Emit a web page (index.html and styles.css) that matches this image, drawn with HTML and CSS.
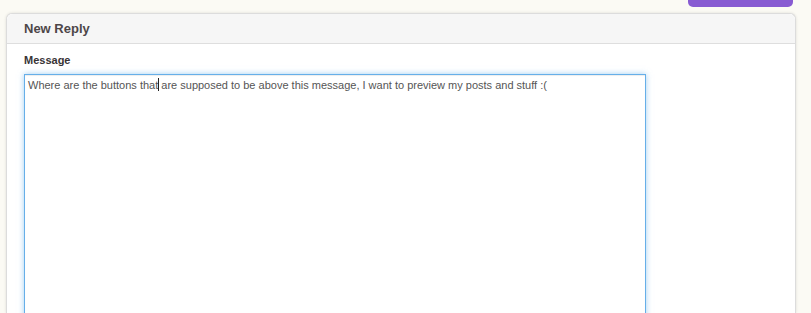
FILE: index.html
```html
<!DOCTYPE html>
<html>

<head>
  <title>New Reply</title>
  <link rel="stylesheet" href="styles.css">
</head>

<body>
  <div class="top-bar">
    <a class="top-btn" href="#"></a>
  </div>

  <section class="panel">
    <header class="panel-heading">New Reply</header>
    <div class="panel-body">
      <label class="field-label">Message</label>
      <div class="msg-input">Where are the buttons that<span class="caret"></span> are supposed to be above this message, I want to preview my posts and stuff :(</div>
    </div>
  </section>
</body>

</html>
```

FILE: styles.css
```css
html,
body {
  margin: 0;
  padding: 0;
  height: 100%;
  overflow: hidden;
}

body {
  background-color: #fbfaf4;
  font-family: "Liberation Sans", Arial, sans-serif;
  color: #4a4446;
}

.top-bar {
  display: flex;
  justify-content: flex-end;
  padding-right: 18px;
  height: 7px;
}

.top-btn {
  display: block;
  width: 105px;
  height: 7px;
  background-color: #885bd2;
  border-radius: 0 0 5px 5px;
}

.panel {
  margin: 6px 15px 0 6px;
  background-color: #fff;
  border: 1px solid #dcdcdc;
  border-bottom: none;
  border-radius: 6px 6px 0 0;
  box-shadow: 0 0 3px rgba(0, 0, 0, 0.12);
  height: 299px;
  overflow: hidden;
}

.panel-heading {
  background-color: #f6f6f6;
  border-bottom: 1px solid #dedede;
  border-radius: 6px 6px 0 0;
  height: 29px;
  padding-left: 17px;
  font-size: 13px;
  font-weight: bold;
  line-height: 30px;
  color: #4d4648;
}

.panel-body {
  padding: 9px 17px 0 17px;
}

.field-label {
  display: block;
  font-size: 11px;
  font-weight: bold;
  color: #383436;
  line-height: 14px;
  margin-bottom: 7px;
}

.msg-input {
  width: 614px;
  height: 300px;
  padding: 3px 3px;
  border: 1px solid #66afe9;
  box-shadow: inset 0 1px 1px rgba(0, 0, 0, 0.075), 0 0 6px rgba(102, 175, 233, 0.6);
  font-size: 11px;
  line-height: 15px;
  color: #555;
  background-color: #fff;
}

.caret {
  display: inline-block;
  width: 1px;
  height: 13px;
  margin-right: -1px;
  background-color: #222;
  vertical-align: -2px;
}
```
